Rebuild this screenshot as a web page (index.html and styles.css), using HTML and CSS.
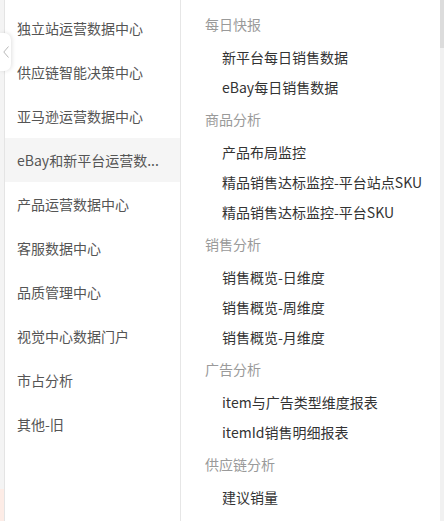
FILE: index.html
```html
<!DOCTYPE html>
<html lang="zh-CN">
<head>
<meta charset="utf-8">
<link rel="stylesheet" href="styles.css">
</head>
<body>
<div class="app">
  <div class="edge"><div class="edge-pink"></div></div>
  <nav class="side">
    <ul class="menu">
      <li class="menu-item">独立站运营数据中心</li>
      <li class="menu-item">供应链智能决策中心</li>
      <li class="menu-item">亚马逊运营数据中心</li>
      <li class="menu-item active">eBay和新平台运营数...</li>
      <li class="menu-item">产品运营数据中心</li>
      <li class="menu-item">客服数据中心</li>
      <li class="menu-item">品质管理中心</li>
      <li class="menu-item">视觉中心数据门户</li>
      <li class="menu-item">市占分析</li>
      <li class="menu-item">其他-旧</li>
    </ul>
  </nav>
  <main class="panel">
    <section class="group">
      <div class="group-title">每日快报</div>
      <div class="link">新平台每日销售数据</div>
      <div class="link">eBay每日销售数据</div>
    </section>
    <section class="group">
      <div class="group-title">商品分析</div>
      <div class="link">产品布局监控</div>
      <div class="link">精品销售达标监控-平台站点SKU</div>
      <div class="link">精品销售达标监控-平台SKU</div>
    </section>
    <section class="group">
      <div class="group-title">销售分析</div>
      <div class="link">销售概览-日维度</div>
      <div class="link">销售概览-周维度</div>
      <div class="link">销售概览-月维度</div>
    </section>
    <section class="group">
      <div class="group-title">广告分析</div>
      <div class="link">item与广告类型维度报表</div>
      <div class="link">itemId销售明细报表</div>
    </section>
    <section class="group">
      <div class="group-title">供应链分析</div>
      <div class="link">建议销量</div>
    </section>
  </main>
  <div class="scrollbar"><div class="thumb"></div></div>
  <button class="collapse" aria-label="收起">
    <svg width="6" height="12" viewBox="0 0 6 12"><path d="M5.5 0.5 L0.8 6 L5.5 11.5" fill="none" stroke="#b8b8b8" stroke-width="1"/></svg>
  </button>
</div>
</body>
</html>
```
FILE: styles.css
```css
* { box-sizing: border-box; }
html, body { margin: 0; padding: 0; }
body {
  width: 444px;
  height: 521px;
  overflow: hidden;
  background: #fff;
  font-family: "Noto Sans CJK SC", "Noto Sans", sans-serif;
  font-size: 14px;
}
.app {
  position: relative;
  display: flex;
  height: 521px;
}
.edge {
  width: 5px;
  flex: none;
  background: #f4f4f4;
  border-right: 1px solid #e4e4e4;
  display: flex;
  flex-direction: column;
  justify-content: flex-end;
}
.edge-pink {
  height: 32px;
  background: #fdece6;
}
.side {
  width: 176px;
  flex: none;
  background: #fff;
  border-right: 1px solid #e6e6e6;
}
.menu {
  list-style: none;
  margin: 0;
  padding: 6px 0 0;
}
.menu-item {
  height: 44px;
  line-height: 44px;
  padding: 0 0 0 12px;
  color: #555;
  white-space: nowrap;
}
.menu-item.active {
  background: #f5f5f5;
}
.panel {
  flex: 1;
  padding: 7px 0 0 24px;
}
.group-title {
  height: 35px;
  line-height: 35px;
  color: #9a9a9a;
}
.link {
  height: 30px;
  line-height: 30px;
  padding-left: 17px;
  color: #333;
  white-space: nowrap;
}
.scrollbar {
  width: 4px;
  flex: none;
  background: #f1f1f1;
}
.thumb {
  height: 48px;
  background: #dcdcdc;
}
.collapse {
  position: absolute;
  left: 0;
  top: 33px;
  width: 11px;
  height: 38px;
  padding: 0;
  border: none;
  border-radius: 0 7px 7px 0;
  background: #fff;
  box-shadow: 1px 0 4px rgba(0,0,0,0.12);
  display: flex;
  align-items: center;
  justify-content: center;
}
```
